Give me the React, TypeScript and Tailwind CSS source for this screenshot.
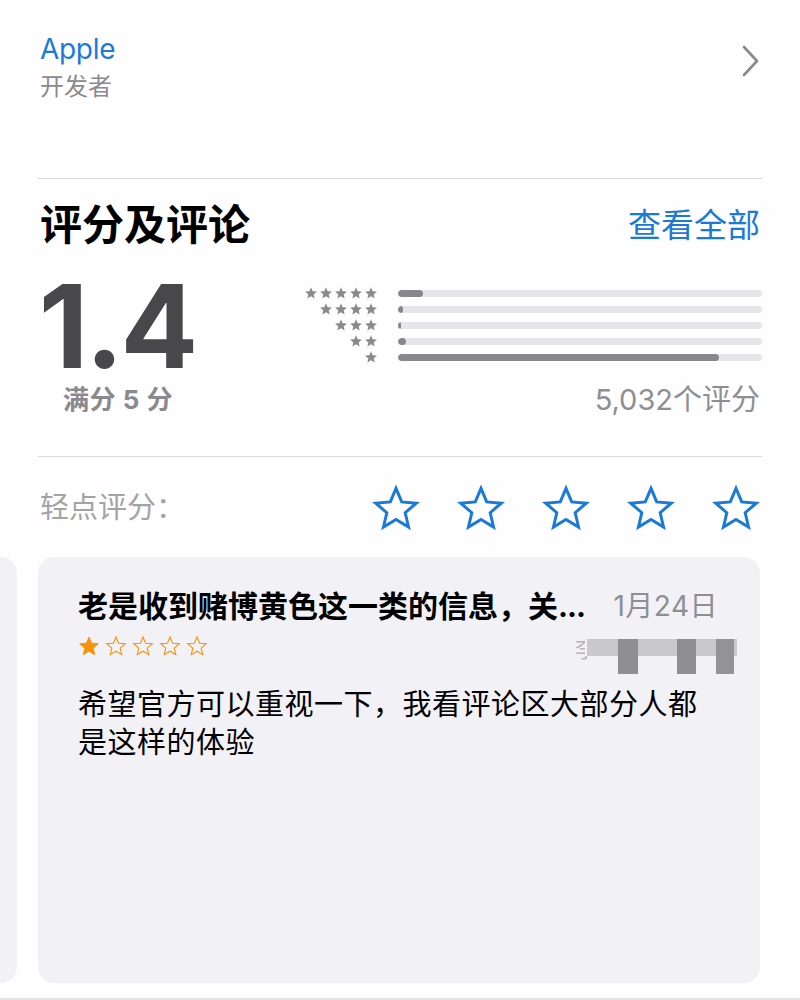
import React from "react";

const STAR = "M12 2.2l2.85 6.75 7.3.62-5.55 4.8 1.67 7.13L12 17.7l-6.27 3.8 1.67-7.13-5.55-4.8 7.3-.62z";

function Star({ size, fill, stroke, sw }: { size: number; fill: string; stroke: string; sw: number }) {
  return (
    <svg width={size} height={size} viewBox="0 0 24 24">
      <path d={STAR} fill={fill} stroke={stroke} strokeWidth={sw} strokeLinejoin="miter" />
    </svg>
  );
}

function GrayStars({ n }: { n: number }) {
  return (
    <div className="flex h-[16px] items-center justify-end gap-[1px]">
      {Array.from({ length: n }).map((_, i) => (
        <Star key={i} size={14} fill="#8a8a8e" stroke="none" sw={0} />
      ))}
    </div>
  );
}

const bars = [25, 5, 3, 8, 321];

export default function App() {
  return (
    <div
      className="w-[800px] h-[1000px] bg-[#fefefe] flex flex-col overflow-hidden"
      style={{ fontFamily: 'Inter, "Noto Sans CJK SC", sans-serif' }}
    >
      {/* developer */}
      <div className="h-[178px] pl-[40px] pr-[40px] pt-[32px] flex justify-between">
        <div>
          <div className="text-[28px] leading-[34px] text-[#1b7ad6] tracking-[-0.3px]">Apple</div>
          <div className="text-[24px] leading-[30px] text-[#8a8a8e] mt-[6px]">开发者</div>
        </div>
        <svg width="20" height="32" viewBox="0 0 20 32" className="mt-[13px]">
          <path d="M4 2 L17 16 L4 30" fill="none" stroke="#8a8a8e" strokeWidth="2.6" strokeLinecap="round" strokeLinejoin="round" />
        </svg>
      </div>
      <div className="mx-[38px] h-px bg-[#d9d9d9]" />

      {/* header */}
      <div className="mt-[21px] h-[50px] px-[40px] flex items-center justify-between">
        <div className="text-[42px] leading-[50px] font-bold text-black">评分及评论</div>
        <div className="text-[33px] leading-[40px] text-[#1b7ad6]">查看全部</div>
      </div>

      {/* rating */}
      <div className="mt-[19px] pl-[40px] pr-[38px] flex">
        <div className="w-[156px] flex flex-col items-center">
          <div className="mt-[8px] h-[100px] text-[115px] leading-[100px] font-bold text-[#48484b] tracking-[-3px] pr-[2px]">1.4</div>
          <div className="mt-[7px] text-[26px] leading-[32px] font-bold text-[#8a8a8e] tracking-[0.5px]">满分 5 分</div>
        </div>
        <div className="flex-1 flex flex-col pt-[16px]">
          <div className="flex">
            <div className="w-[182px] flex flex-col">
              <GrayStars n={5} />
              <GrayStars n={4} />
              <GrayStars n={3} />
              <GrayStars n={2} />
              <GrayStars n={1} />
            </div>
            <div className="ml-[20px] flex-1 flex flex-col">
              {bars.map((w, i) => (
                <div key={i} className="h-[16px] flex items-center">
                  <div className="w-full h-[7px] rounded-full bg-[#e6e6e9] overflow-hidden">
                    <div className="h-full rounded-full bg-[#88888c]" style={{ width: w }} />
                  </div>
                </div>
              ))}
            </div>
          </div>
          <div className="mt-[19px] text-right text-[29px] leading-[32px] text-[#8e8e93] pr-[2px]">5,032个评分</div>
        </div>
      </div>

      <div className="mt-[40px] mx-[38px] h-px bg-[#d9d9d9]" />

      {/* tap to rate */}
      <div className="mt-[27px] h-[48px] pl-[40px] pr-[40px] flex items-center justify-between">
        <div className="text-[29px] leading-[40px] text-[#a3a3a6]">轻点评分：</div>
        <div className="flex gap-[37px]">
          {Array.from({ length: 5 }).map((_, i) => (
            <Star key={i} size={48} fill="none" stroke="#1b7ad6" sw={1.5} />
          ))}
        </div>
      </div>

      {/* reviews */}
      <div className="mt-[25px] flex gap-[21px]">
        <div className="w-[17px] h-[426px] rounded-r-[16px] bg-[#f2f1f6]" />
        <div className="relative w-[722px] h-[426px] rounded-[16px] bg-[#f2f1f6] pl-[40px] pr-[42px] pt-[31px]">
          <div className="flex justify-between items-center h-[36px]">
            <div className="text-[30px] leading-[36px] font-bold text-black whitespace-nowrap">
              老是收到赌博黄色这一类的信息，关<span className="tracking-[-1px]">...</span>
            </div>
            <div className="text-[28px] leading-[36px] text-[#8e8e93] tracking-[0.5px]">1月24日</div>
          </div>
          <div className="mt-[11px] flex gap-[5px] h-[22px]">
            <Star size={22} fill="#f7930a" stroke="#f7930a" sw={1} />
            {Array.from({ length: 4 }).map((_, i) => (
              <Star key={i} size={22} fill="none" stroke="#f7930a" sw={1.2} />
            ))}
          </div>
          {/* author name, covered by a mosaic */}
          <div className="absolute left-[537px] top-[79px] text-[22px] leading-[26px] text-[#b5b5b8]">李</div>
          <div className="absolute left-[547px] top-[78px] w-[152px] h-[21px] bg-[#f2f1f6]" />
          <div className="absolute left-[549px] top-[82px] w-[150px] h-[17px] bg-[#c9c9cb]" />
          <div className="absolute left-[580px] top-[82px] w-[20px] h-[35px] bg-[#8f8f92]" />
          <div className="absolute left-[639px] top-[82px] w-[19px] h-[35px] bg-[#8f8f92]" />
          <div className="absolute left-[678px] top-[82px] w-[18px] h-[35px] bg-[#939396]" />
          <div className="mt-[29px] text-[29px] leading-[38px] tracking-[0.5px] text-black">
            希望官方可以重视一下，我看评论区大部分人都是这样的体验
          </div>
        </div>
      </div>

      <div className="mt-auto h-[2px] bg-[#e4e4e4]" />
    </div>
  );
}
